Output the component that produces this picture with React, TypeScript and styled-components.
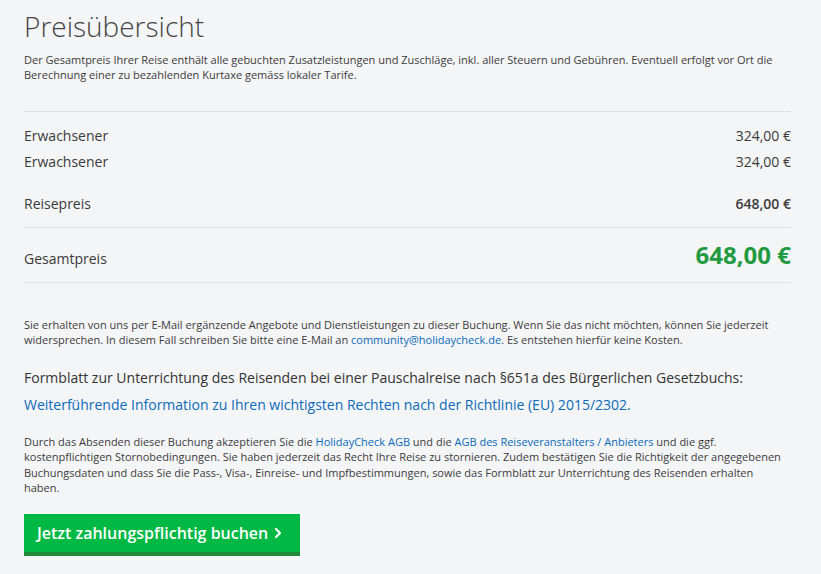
import styled, { createGlobalStyle } from 'styled-components';

const GlobalStyle = createGlobalStyle`
  html, body {
    margin: 0;
    padding: 0;
    background: #f4f5f7;
  }
  body {
    font-family: 'Open Sans', 'Liberation Sans', sans-serif;
    color: #333;
  }
`;

const Page = styled.div`
  padding: 0 30px 0 24px;
  min-height: 574px;
  box-sizing: border-box;
`;

const Title = styled.h1`
  margin: 0;
  padding-top: 6px;
  font-size: 28px;
  font-weight: 300;
  line-height: 40px;
  color: #444;
`;

const Note = styled.p<{ $top?: number }>`
  margin: ${(p) => p.$top ?? 0}px 0 0;
  font-size: 11px;
  line-height: 15.3px;
  color: #3c3c3c;
`;

const Link = styled.a`
  color: #0b6ab8;
  text-decoration: none;
`;

const Divider = styled.hr<{ $top?: number }>`
  margin: ${(p) => p.$top ?? 0}px 0 0;
  border: none;
  border-top: 1px solid #dddfe2;
`;

const Lines = styled.div`
  padding: 11px 0 10px;
`;

const Row = styled.div<{ $gap?: number }>`
  display: flex;
  justify-content: space-between;
  align-items: baseline;
  margin-top: ${(p) => p.$gap ?? 0}px;
  font-size: 14px;
  line-height: 26px;
  color: #3a3a3a;
`;

const Amount = styled.span<{ $bold?: boolean }>`
  font-weight: ${(p) => (p.$bold ? 600 : 400)};
`;

const TotalRow = styled.div`
  display: flex;
  justify-content: space-between;
  align-items: baseline;
  padding: 11px 0 11px;
  font-size: 14px;
  color: #3a3a3a;
`;

const TotalAmount = styled.span`
  font-size: 24px;
  line-height: 32px;
  font-weight: 700;
  color: #229a41;
`;

const Heading = styled.p`
  margin: 17px 0 0;
  font-size: 14px;
  line-height: 27px;
  color: #333;
`;

const BigLink = styled(Link)`
  display: block;
  font-size: 14px;
  line-height: 27px;
`;

const BookButton = styled.button`
  display: inline-flex;
  align-items: center;
  gap: 6px;
  margin-top: 19px;
  height: 42px;
  padding: 0 18px 0 13px;
  border: none;
  border-bottom: 4px solid #1e8a3a;
  background: #00b944;
  color: #fff;
  font-family: inherit;
  font-size: 16px;
  font-weight: 600;
  cursor: pointer;
`;

export default function App() {
  return (
    <>
      <GlobalStyle />
      <Page>
        <Title>Preisübersicht</Title>
        <Note $top={6}>
          Der Gesamtpreis Ihrer Reise enthält alle gebuchten Zusatzleistungen und Zuschläge, inkl. aller
          Steuern und Gebühren. Eventuell erfolgt vor Ort die Berechnung einer zu bezahlenden Kurtaxe gemäss
          lokaler Tarife.
        </Note>
        <Divider $top={28} />
        <Lines>
          <Row>
            <span>Erwachsener</span>
            <Amount>324,00 €</Amount>
          </Row>
          <Row>
            <span>Erwachsener</span>
            <Amount>324,00 €</Amount>
          </Row>
          <Row $gap={16}>
            <span>Reisepreis</span>
            <Amount $bold>648,00 €</Amount>
          </Row>
        </Lines>
        <Divider />
        <TotalRow>
          <span>Gesamtpreis</span>
          <TotalAmount>648,00 €</TotalAmount>
        </TotalRow>
        <Divider />
        <Note $top={34}>
          Sie erhalten von uns per E-Mail ergänzende Angebote und Dienstleistungen zu dieser Buchung. Wenn Sie
          das nicht möchten, können Sie jederzeit widersprechen. In diesem Fall schreiben Sie bitte eine E-Mail
          an <Link href="#">community@holidaycheck.de</Link>. Es entstehen hierfür keine Kosten.
        </Note>
        <Heading>
          Formblatt zur Unterrichtung des Reisenden bei einer Pauschalreise nach §651a des Bürgerlichen
          Gesetzbuchs:
        </Heading>
        <BigLink href="#">
          Weiterführende Information zu Ihren wichtigsten Rechten nach der Richtlinie (EU) 2015/2302.
        </BigLink>
        <Note $top={16}>
          Durch das Absenden dieser Buchung akzeptieren Sie die <Link href="#">HolidayCheck AGB</Link> und die{' '}
          <Link href="#">AGB des Reiseveranstalters / Anbieters</Link> und die ggf. kostenpflichtigen
          Stornobedingungen. Sie haben jederzeit das Recht Ihre Reise zu stornieren. Zudem bestätigen Sie die
          Richtigkeit der angegebenen Buchungsdaten und dass Sie die Pass-, Visa-, Einreise- und
          Impfbestimmungen, sowie das Formblatt zur Unterrichtung des Reisenden erhalten haben.
        </Note>
        <BookButton>
          Jetzt zahlungspflichtig buchen
          <svg width="8" height="12" viewBox="0 0 8 12" fill="none">
            <path d="M2 2l4 4-4 4" stroke="#fff" strokeWidth="2.2" strokeLinecap="round" strokeLinejoin="round" />
          </svg>
        </BookButton>
      </Page>
    </>
  );
}
